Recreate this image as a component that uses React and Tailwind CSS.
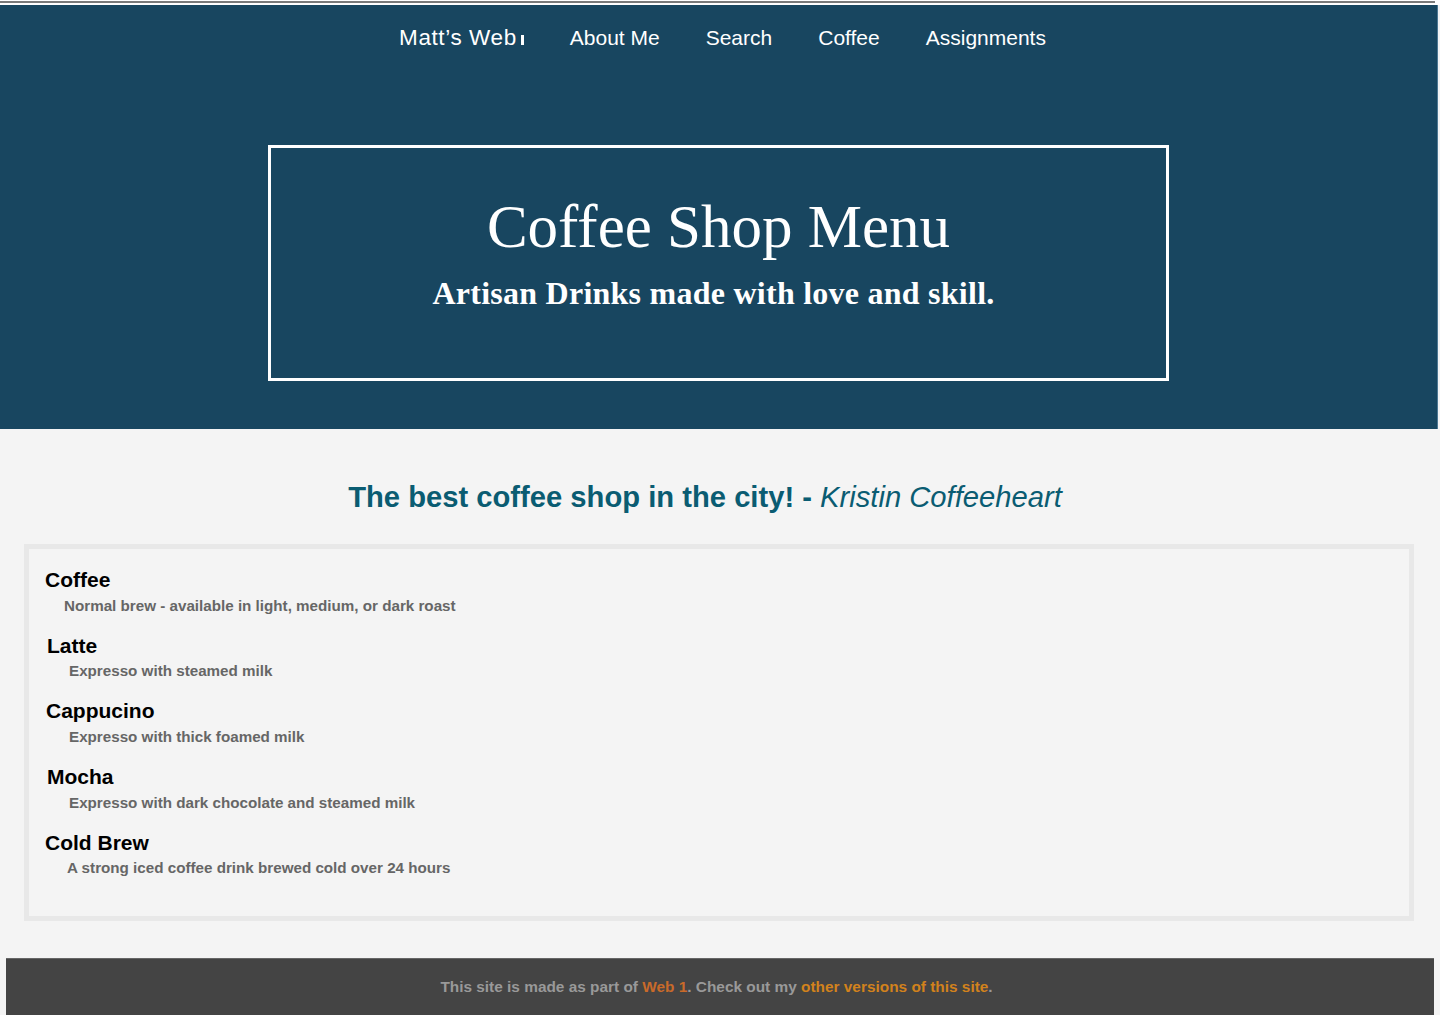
import React from "react";

const drinks = [
  { name: "Coffee", desc: "Normal brew - available in light, medium, or dark roast", nameX: "ml-0", descX: "ml-[19px]" },
  { name: "Latte", desc: "Expresso with steamed milk", nameX: "ml-[2px]", descX: "ml-[24px]" },
  { name: "Cappucino", desc: "Expresso with thick foamed milk", nameX: "ml-[1px]", descX: "ml-[24px]" },
  { name: "Mocha", desc: "Expresso with dark chocolate and steamed milk", nameX: "ml-[2px]", descX: "ml-[24px]" },
  { name: "Cold Brew", desc: "A strong iced coffee drink brewed cold over 24 hours", nameX: "ml-0", descX: "ml-[22px]" },
];

const navLinks = ["About Me", "Search", "Coffee", "Assignments"];

export default function App() {
  return (
    <div className="min-h-screen bg-[#f4f4f4] font-['Liberation_Sans',Arial,sans-serif]">
      {/* top strip */}
      <div className="bg-white pt-px pb-[2px] pr-[5px]">
        <div className="h-[2px] bg-[#7a7a7a]"></div>
      </div>

      {/* header */}
      <header className="w-[1438px] h-[424px] bg-[#184660] border-r border-[#4d7893]">
        <nav className="h-[64px] flex items-center justify-center pl-[8px] pt-[2px] text-white text-[21px] leading-none">
          <div className="flex items-baseline gap-[46px]">
            <div className="flex items-baseline">
              <span className="text-[22.5px] tracking-[0.6px]">Matt’s Web</span>
              <span className="inline-block ml-[4px] w-[3px] h-[10px] bg-white"></span>
            </div>
            {navLinks.map((link) => (
              <a key={link} href="#" className="text-white">
                {link}
              </a>
            ))}
          </div>
        </nav>

        <div className="mt-[76px] mx-auto w-[901px] h-[236px] border-[3px] border-white text-white text-center font-['Liberation_Serif','Times_New_Roman',serif]">
          <h1 className="pt-[48px] text-[61px] leading-none">Coffee Shop Menu</h1>
          <h2 className="mt-[20px] pr-[10px] text-[32px] font-bold leading-none tracking-[0.25px]">
            Artisan Drinks made with love and skill.
          </h2>
        </div>
      </header>

      {/* quote */}
      <p className="mt-[54px] pr-[30px] text-center text-[29.2px] font-bold leading-none text-[#0a5c72]">
        The best coffee shop in the city! -{" "}
        <span className="italic font-normal">Kristin Coffeeheart</span>
      </p>

      {/* menu */}
      <section className="mt-[32px] ml-[24px] mr-[26px] h-[377px] border-[5px] border-[#e8e8e8] pl-[16px] pt-[20px]">
        <ul className="flex flex-col gap-[21.8px]">
          {drinks.map((d) => (
            <li key={d.name}>
              <h3 className={`${d.nameX} text-[21px] font-bold leading-none text-black`}>{d.name}</h3>
              <p className={`${d.descX} mt-[7.6px] text-[15.2px] font-bold leading-none text-[#666]`}>{d.desc}</p>
            </li>
          ))}
        </ul>
      </section>

      {/* footer */}
      <footer className="mt-[37px] mx-[6px] bg-[#444] border-t border-[#666] pt-[20px] pb-[20px] pr-[7px] text-center text-[15.4px] font-bold leading-none text-[#999]">
        This site is made as part of <a href="#" className="text-[#c96a2a]">Web 1</a>. Check out my{" "}
        <a href="#" className="text-[#d2821c]">other versions of this site</a>.
      </footer>
    </div>
  );
}
